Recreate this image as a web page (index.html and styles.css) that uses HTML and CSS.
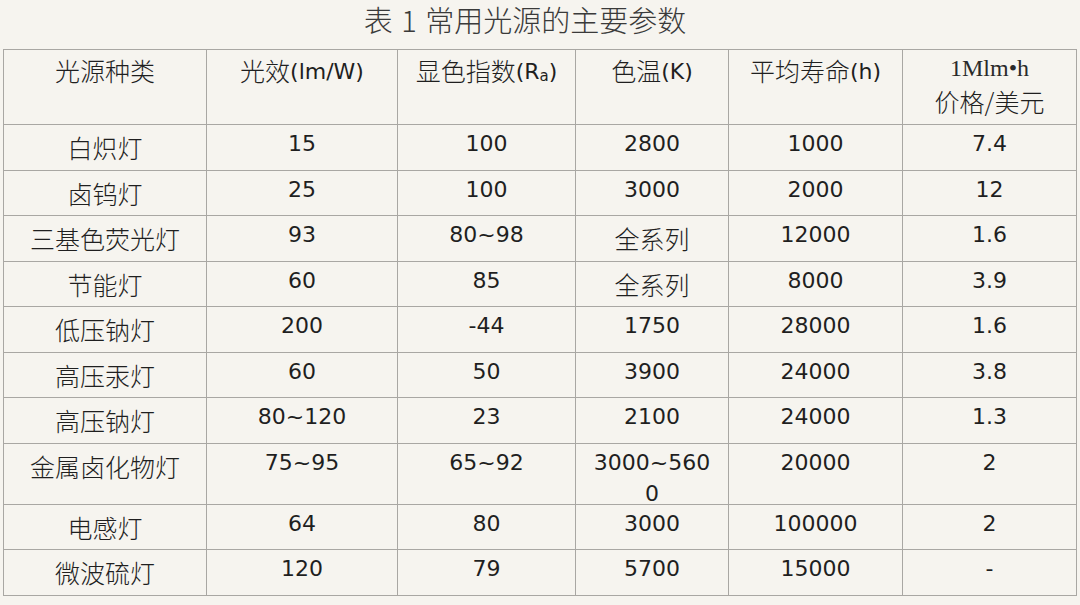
FILE: index.html
```html
<!DOCTYPE html>
<html lang="zh-CN">
<head>
<meta charset="utf-8">
<title>表 1 常用光源的主要参数</title>
<link rel="stylesheet" href="styles.css">
</head>
<body>
<div class="page">
  <h1 class="title">表 1 常用光源的主要参数</h1>
  <table class="grid">
    <colgroup>
      <col class="c1"><col class="c2"><col class="c3"><col class="c4"><col class="c5"><col class="c6">
    </colgroup>
    <thead>
      <tr class="head">
        <th><span class="zh">光源种类</span></th>
        <th><span class="zh">光效</span>(lm/W)</th>
        <th><span class="zh">显色指数</span>(R<sub class="sub">a</sub>)</th>
        <th><span class="zh">色温</span>(K)</th>
        <th><span class="zh">平均寿命</span>(h)</th>
        <th><span class="unit">1Mlm•h</span><span class="zh price">价格/美元</span></th>
      </tr>
    </thead>
    <tbody>
      <tr><td><span class="zh">白炽灯</span></td><td>15</td><td>100</td><td>2800</td><td>1000</td><td>7.4</td></tr>
      <tr><td><span class="zh">卤钨灯</span></td><td>25</td><td>100</td><td>3000</td><td>2000</td><td>12</td></tr>
      <tr><td><span class="zh">三基色荧光灯</span></td><td>93</td><td>80~98</td><td><span class="zh">全系列</span></td><td>12000</td><td>1.6</td></tr>
      <tr><td><span class="zh">节能灯</span></td><td>60</td><td>85</td><td><span class="zh">全系列</span></td><td>8000</td><td>3.9</td></tr>
      <tr><td><span class="zh">低压钠灯</span></td><td>200</td><td>-44</td><td>1750</td><td>28000</td><td>1.6</td></tr>
      <tr><td><span class="zh">高压汞灯</span></td><td>60</td><td>50</td><td>3900</td><td>24000</td><td>3.8</td></tr>
      <tr><td><span class="zh">高压钠灯</span></td><td>80~120</td><td>23</td><td>2100</td><td>24000</td><td>1.3</td></tr>
      <tr class="tall"><td><span class="zh">金属卤化物灯</span></td><td>75~95</td><td>65~92</td><td><div class="two">3000~560<br>0</div></td><td>20000</td><td>2</td></tr>
      <tr><td><span class="zh">电感灯</span></td><td>64</td><td>80</td><td>3000</td><td>100000</td><td>2</td></tr>
      <tr><td><span class="zh">微波硫灯</span></td><td>120</td><td>79</td><td>5700</td><td>15000</td><td>-</td></tr>
    </tbody>
  </table>
</div>
</body>
</html>
```

FILE: styles.css
```css
html, body {
  margin: 0;
  padding: 0;
  background: #f6f4ef;
}

.page {
  width: 1080px;
  height: 605px;
  overflow: hidden;
  background: #f6f4ef;
  color: #1f1f1f;
  font-family: "DejaVu Sans", "Noto Sans CJK SC", sans-serif;
}

.title {
  margin: 0;
  padding: 1px 30px 0 0;
  height: 48px;
  line-height: 36px;
  text-align: center;
  font-weight: 300;
  font-size: 29px;
  color: #3a3a3a;
  font-family: "Noto Sans CJK SC", sans-serif;
  word-spacing: 2px;
}

.grid {
  margin-left: 3px;
  border-collapse: collapse;
  table-layout: fixed;
  width: 1073px;
}

.c1 { width: 203px; }
.c2 { width: 191px; }
.c3 { width: 178px; }
.c4 { width: 153px; }
.c5 { width: 174px; }
.c6 { width: 174px; }

.grid th,
.grid td {
  border: 1px solid #a9a7a3;
  padding: 3px 0 0;
  vertical-align: top;
  text-align: center;
  font-weight: normal;
  font-size: 22px;
  line-height: 31px;
  color: #1f1f1f;
}

.grid tbody tr { height: 45.5px; }
.grid tbody tr.tall { height: 61px; }
.grid thead tr.head { height: 75px; }

.zh {
  font-family: "Noto Sans CJK SC", sans-serif;
  font-weight: 300;
  font-size: 25px;
  position: relative;
  top: 4px;
}

.grid th .zh { top: 2px; }

.two {
  margin-bottom: -6px;
}

.sub {
  font-size: 15px;
  vertical-align: -2px;
  line-height: 0;
}

.unit {
  display: block;
  font-family: "Liberation Serif", serif;
  font-size: 24px;
  line-height: 30px;
  color: #2a2a2a;
}

.grid th .price {
  display: block;
  line-height: 36px;
  top: 0;
}
```
